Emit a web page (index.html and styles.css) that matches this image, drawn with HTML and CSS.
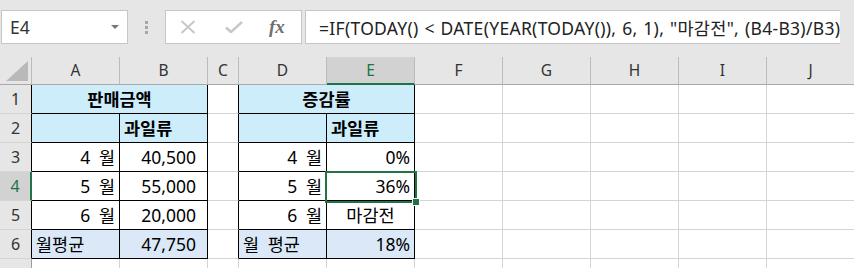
FILE: index.html
```html
<!DOCTYPE html>
<html lang="ko">

<head>
    <meta charset="utf-8">
    <title>판매금액 - 증감률</title>
    <link rel="stylesheet" href="styles.css">
</head>

<body>
    <div class="formula-bar">
        <div class="name-box">
            <span>E4</span>
            <svg class="drop" width="8" height="4" viewBox="0 0 8 4"><path d="M0 0h8L4 4z" fill="#777"/></svg>
        </div>
        <div class="grip"><i></i><i></i><i></i></div>
        <div class="fx-box">
            <svg width="16" height="14" viewBox="0 0 16 14"><path d="M1.5 1L14.5 13M14.5 1L1.5 13" stroke="#c8c8c8" stroke-width="2" fill="none"/></svg>
            <svg width="18" height="12" viewBox="0 0 18 12"><path d="M1 6.5L6 11L17 1" stroke="#c8c8c8" stroke-width="2.6" fill="none"/></svg>
            <span class="fx">fx</span>
        </div>
        <div class="formula">=IF(TODAY() &lt; DATE(YEAR(TODAY()), 6, 1), "마감전", (B4-B3)/B3)</div>
    </div>

    <div class="sheet">
        <div class="corner"><svg width="22" height="20" viewBox="0 0 22 20"><path d="M22 0V20H0z" fill="#b9b9b9"/></svg></div>
        <div class="ch">A</div>
        <div class="ch">B</div>
        <div class="ch">C</div>
        <div class="ch">D</div>
        <div class="ch act">E</div>
        <div class="ch">F</div>
        <div class="ch">G</div>
        <div class="ch">H</div>
        <div class="ch">I</div>
        <div class="ch">J</div>

        <div class="rh kr">1</div>
        <div class="c span2 fill title kr kb">판매금액</div>
        <div class="c kr"></div>
        <div class="c span2 fill title kr kb">증감률</div>
        <div class="c"></div><div class="c"></div><div class="c"></div><div class="c"></div><div class="c"></div>

        <div class="rh kr">2</div>
        <div class="c fill kr kb"></div>
        <div class="c fill title left kr kb">과일류</div>
        <div class="c kr"></div>
        <div class="c fill kr kb"></div>
        <div class="c fill title left kr kb">과일류</div>
        <div class="c"></div><div class="c"></div><div class="c"></div><div class="c"></div><div class="c"></div>

        <div class="rh kr">3</div>
        <div class="c right kr kb">4 월</div>
        <div class="c num kr kb">40,500</div>
        <div class="c kr"></div>
        <div class="c right kr kb">4 월</div>
        <div class="c right kr kb">0%</div>
        <div class="c"></div><div class="c"></div><div class="c"></div><div class="c"></div><div class="c"></div>

        <div class="rh act">4</div>
        <div class="c right kr kb">5 월</div>
        <div class="c num kr kb">55,000</div>
        <div class="c kr"></div>
        <div class="c right kr kb">5 월</div>
        <div class="c right kr kb">36%</div>
        <div class="c"></div><div class="c"></div><div class="c"></div><div class="c"></div><div class="c"></div>

        <div class="rh kr">5</div>
        <div class="c right kr kb">6 월</div>
        <div class="c num kr kb">20,000</div>
        <div class="c kr"></div>
        <div class="c right kr kb">6 월</div>
        <div class="c center kr kb">마감전</div>
        <div class="c"></div><div class="c"></div><div class="c"></div><div class="c"></div><div class="c"></div>

        <div class="rh kr">6</div>
        <div class="c avg left kr kb">월평균</div>
        <div class="c avg num kr kb">47,750</div>
        <div class="c kr"></div>
        <div class="c avg left kr kb">월 평균</div>
        <div class="c avg right kr kb">18%</div>
        <div class="c"></div><div class="c"></div><div class="c"></div><div class="c"></div><div class="c"></div>

        <div class="rh"></div>
        <div class="c"></div><div class="c"></div><div class="c"></div><div class="c"></div><div class="c"></div>
        <div class="c"></div><div class="c"></div><div class="c"></div><div class="c"></div><div class="c"></div>

        <div class="selection"><span class="handle"></span></div>
    </div>
</body>

</html>
```

FILE: styles.css
```css
body {
    margin: 0;
    overflow: hidden;
    background-color: #fff;
    font-family: 'Noto Sans', 'Noto Sans CJK KR', sans-serif;
    color: #000;
}

/* formula bar */

.formula-bar {
    display: flex;
    height: 57px;
    padding-top: 10px;
    box-sizing: border-box;
    background-color: #e6e6e6;
}

.name-box {
    display: flex;
    align-items: center;
    justify-content: space-between;
    box-sizing: border-box;
    width: 127px;
    height: 34px;
    margin-left: 1px;
    padding: 0 8px 0 8px;
    background-color: #fff;
    border: 1px solid #c6c6c6;
    font-size: 17.5px;
    color: #333;
}

.grip {
    display: flex;
    flex-direction: column;
    align-items: center;
    justify-content: center;
    gap: 2px;
    width: 37px;
    height: 34px;
}

.grip i {
    width: 3px;
    height: 3px;
    background-color: #a6a6a6;
}

.fx-box {
    display: flex;
    align-items: center;
    box-sizing: border-box;
    width: 137px;
    height: 34px;
    padding-left: 14px;
    gap: 29px;
    background-color: #fff;
    border: 1px solid #c6c6c6;
}

.fx {
    font-family: 'Liberation Serif', serif;
    font-style: italic;
    font-weight: bold;
    font-size: 19px;
    color: #707070;
    margin-left: -3px;
}

.formula {
    display: flex;
    align-items: center;
    box-sizing: border-box;
    width: 535px;
    height: 34px;
    margin-left: 3px;
    padding-left: 13px;
    background-color: #fff;
    border: 1px solid #c6c6c6;
    border-right: none;
    font-size: 17.5px;
    letter-spacing: 0.3px;
    word-spacing: 1px;
    color: #222;
    white-space: nowrap;
    overflow: hidden;
}

/* grid */

.sheet {
    position: relative;
    display: grid;
    grid-template-columns: 32px 88px 88px 31px 88px 88px repeat(5, 88px);
    grid-template-rows: 28px repeat(7, 29px);
}

.corner,
.ch,
.rh {
    box-sizing: border-box;
    background-color: #e6e6e6;
    color: #333;
    border-right: 1px solid #bcbcbc;
    border-bottom: 1px solid #a9a9a9;
    display: flex;
    align-items: center;
    justify-content: center;
}

.corner {
    align-items: flex-end;
    justify-content: flex-end;
    padding: 0 3px 3px 0;
}

.ch {
    font-size: 15.5px;
    padding-bottom: 1px;
}

.rh {
    font-size: 16px;
    border-bottom-color: #d4d4d4;
    border-right-color: #9e9e9e;
}

.ch.act {
    background-color: #d2d2d2;
    color: #217346;
    border-bottom: 2px solid #217346;
}

.rh.act {
    background-color: #d2d2d2;
    color: #217346;
    border-right: 2px solid #217346;
}

.c {
    box-sizing: border-box;
    display: flex;
    align-items: flex-end;
    padding: 0 4px 2px 4px;
    border-right: 1px solid #d4d4d4;
    border-bottom: 1px solid #d4d4d4;
    font-size: 17.5px;
    line-height: 24px;
    word-spacing: 4px;
    white-space: nowrap;
}

.span2 {
    grid-column: span 2;
}

.fill {
    background-color: #cdedfb;
}

.avg {
    background-color: #dae8f8;
}

.title {
    font-weight: bold;
    justify-content: center;
}

.title.left,
.left {
    justify-content: flex-start;
}

.right {
    justify-content: flex-end;
}

.center {
    justify-content: center;
}

.num {
    justify-content: flex-end;
    padding-right: 11px;
}

.kr {
    border-right-color: #000;
}

.kb {
    border-bottom-color: #000;
}

/* active cell E4 */

.selection {
    position: absolute;
    left: 325px;
    top: 114px;
    width: 88px;
    height: 28px;
    border: 2px solid #217346;
}

.handle {
    position: absolute;
    right: -5px;
    bottom: -5px;
    width: 6px;
    height: 6px;
    background-color: #217346;
    border: 1px solid #fff;
}
```
